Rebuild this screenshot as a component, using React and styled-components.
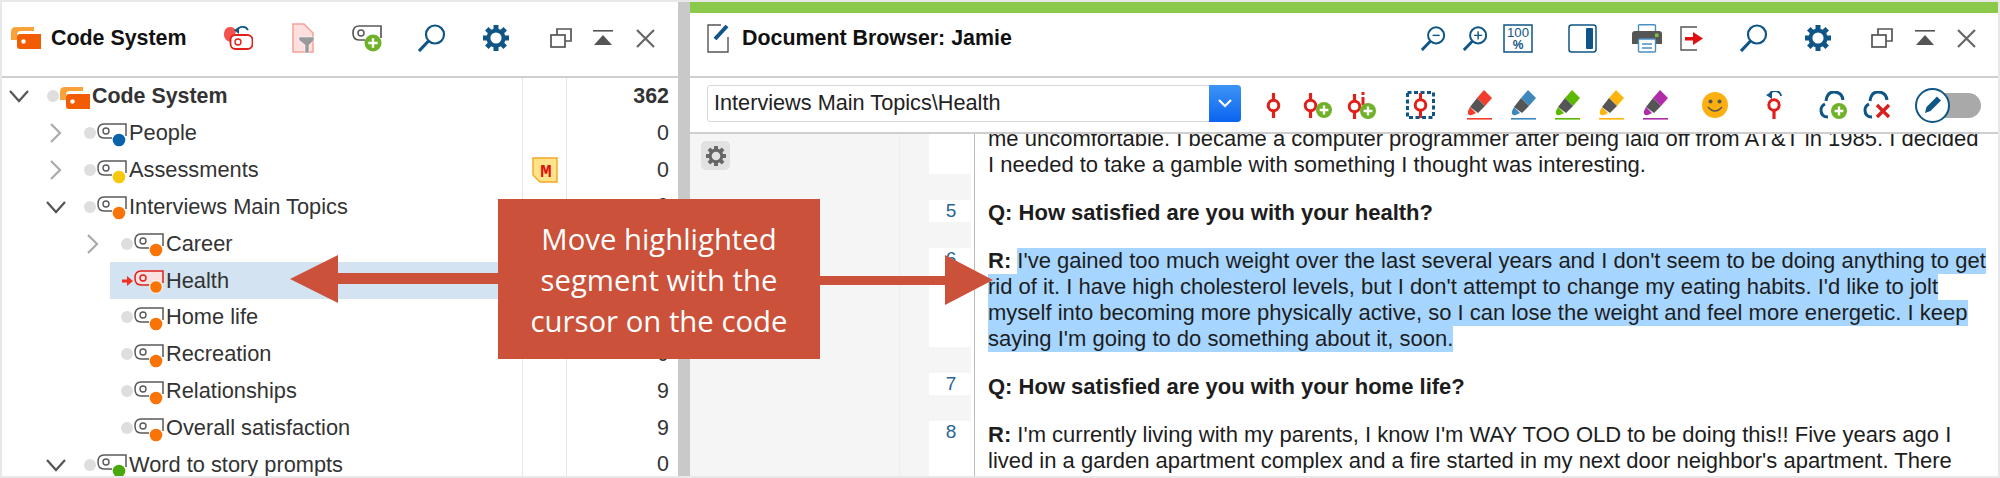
import React from 'react'
import styled, { createGlobalStyle } from 'styled-components'

const BLUE = '#0f5585'
const RED = '#e0201b'
const GREY = '#5a5a5a'

const Global = createGlobalStyle`
  html, body { margin: 0; padding: 0; background: #e8e8e8; }
  body { font-family: "Liberation Sans", Arial, sans-serif; color: #222; }
`

/* ---------- icons ---------- */

const RootCodeIcon = () => (
  <svg width="30" height="24" viewBox="0 0 30 24">
    <path d="M0 14 V6 Q0 1 5 1 H23 V5 H10 Q6 5 6 9 V14 Z" fill="#f9a13a" />
    <path d="M6 11 Q6 8 9 8 H30 V23 H9 Q6 23 6 20 Z" fill="#f25c05" />
    <circle cx="12.5" cy="15.5" r="2.2" fill="#fff" />
  </svg>
)

const CodeIcon = ({ color, active }) => (
  <svg width="30" height="24" viewBox="0 0 30 24">
    <path
      d="M29 13 V1 H7 Q1 1 1 8 Q1 15 7 15 H15"
      fill={active ? '#fbe0e0' : 'none'}
      stroke={active ? RED : GREY}
      strokeWidth="1.5"
    />
    <circle cx="9" cy="8" r="3" fill="none" stroke={active ? RED : GREY} strokeWidth="1.4" />
    <circle cx="22" cy="17" r="6.3" fill={color} stroke={active ? '#fff' : 'none'} strokeWidth="1" />
  </svg>
)

const Chevron = ({ open }) => (
  <svg width="20" height="20" viewBox="0 0 20 20" fill="none">
    {open ? (
      <path d="M1 5 L10 15 L19 5" stroke="#555" strokeWidth="2.2" />
    ) : (
      <path d="M5 1 L14 10 L5 19" stroke="#aaa" strokeWidth="2.2" />
    )}
  </svg>
)

const AddBadge = ({ cx, cy, r = 8 }) => (
  <g>
    <circle cx={cx} cy={cy} r={r} fill="#6fb22a" />
    <path d={`M${cx - r * 0.55} ${cy} H${cx + r * 0.55} M${cx} ${cy - r * 0.55} V${cy + r * 0.55}`} stroke="#fff" strokeWidth="2.4" />
  </g>
)

const Search = ({ minus, plus, size = 29 }) => (
  <svg width={size} height={size - 1} viewBox="0 0 29 28" fill="none">
    <circle cx="18" cy="10.5" r="9" stroke={BLUE} strokeWidth="2.2" />
    <path d="M11.5 17 L2 27" stroke={BLUE} strokeWidth="3.2" />
    {minus && <path d="M14 10.5 H22" stroke={BLUE} strokeWidth="1.6" />}
    {plus && <path d="M13.5 10.5 H22.5 M18 6 V15" stroke={BLUE} strokeWidth="1.6" />}
  </svg>
)

const Gear = ({ size = 26, color = BLUE }) => (
  <svg width={size} height={size} viewBox="0 0 26 26" fill="none">
    <circle cx="13" cy="13" r="7.6" stroke={color} strokeWidth="4" />
    {[0, 45, 90, 135, 180, 225, 270, 315].map(a => (
      <rect key={a} x="10.5" y="0" width="5" height="5" fill={color} transform={`rotate(${a} 13 13)`} />
    ))}
  </svg>
)

const WindowIcon = () => (
  <svg width="22" height="20" viewBox="0 0 22 20" fill="none" stroke="#555" strokeWidth="1.7">
    <path d="M7 7 V1 H21 V13 H15" />
    <rect x="1" y="7" width="14" height="12" />
  </svg>
)

const CollapseIcon = () => (
  <svg width="20" height="16" viewBox="0 0 20 16">
    <rect x="0" y="0" width="20" height="1.6" fill="#555" />
    <path d="M10 5 L19 15 H1 Z" fill="#555" />
  </svg>
)

const CloseIcon = () => (
  <svg width="19" height="19" viewBox="0 0 19 19" fill="none">
    <path d="M1 1 L18 18 M18 1 L1 18" stroke="#666" strokeWidth="2.2" />
  </svg>
)

const UndoCodeIcon = () => (
  <svg width="29" height="24" viewBox="0 0 29 24" fill="none">
    <path d="M0 9 Q0 1 6 1 Q11 1 12 6 L6 16 Q0 14 0 9 Z" fill="#f4524d" />
    <path d="M13 5 A6 6 0 0 1 24 4" stroke={BLUE} strokeWidth="1.8" />
    <path d="M10 4 L15 1 V8 Z" fill={BLUE} />
    <rect x="6.5" y="9" width="22" height="14" rx="5" fill="#fff" stroke={RED} strokeWidth="1.8" />
    <circle cx="14" cy="16" r="3" stroke={RED} strokeWidth="1.4" />
  </svg>
)

const FunnelDocIcon = () => (
  <svg width="22" height="30" viewBox="0 0 22 30">
    <path d="M1 1 H12 L21 10 V29 H1 Z" fill="#fde0de" stroke="#f6a09a" strokeWidth="1.5" />
    <path d="M7 14 H22 V17 L17 22 V30 H13 V22 L7 17 Z" fill="#9a9a9a" stroke="#fff" strokeWidth="0.5" />
  </svg>
)

const AddCodeIcon = () => (
  <svg width="30" height="27" viewBox="0 0 30 27" fill="none">
    <path d="M29 13 V1 H7 Q1 1 1 8 Q1 15 7 15 H13" stroke={GREY} strokeWidth="1.7" />
    <circle cx="9" cy="8" r="3" stroke={GREY} strokeWidth="1.5" />
    <AddBadge cx={21} cy={18} r={8.5} />
  </svg>
)

const DocEditIcon = () => (
  <svg width="22" height="29" viewBox="0 0 22 29" fill="none">
    <path d="M14 1 H1 V28 H21 V13" stroke="#555" strokeWidth="1.4" />
    <path d="M8 15 L20 2" stroke={BLUE} strokeWidth="4" />
  </svg>
)

const HundredIcon = () => (
  <svg width="30" height="29" viewBox="0 0 30 29">
    <rect x="1" y="1" width="28" height="27" fill="none" stroke={BLUE} strokeWidth="1.5" />
    <text x="15" y="13" textAnchor="middle" fontSize="13" fontFamily="Liberation Sans" fill={BLUE} textLength="22" lengthAdjust="spacingAndGlyphs">100</text>
    <text x="15" y="25" textAnchor="middle" fontSize="12" fontWeight="700" fontFamily="Liberation Sans" fill={BLUE}>%</text>
  </svg>
)

const PanelIcon = () => (
  <svg width="29" height="29" viewBox="0 0 29 29">
    <rect x="1" y="1" width="27" height="27" rx="2.5" fill="#fff" stroke={BLUE} strokeWidth="1.5" />
    <rect x="18" y="4" width="7" height="21" rx="1" fill={BLUE} />
  </svg>
)

const PrinterIcon = () => (
  <svg width="30" height="29" viewBox="0 0 30 29" fill="none">
    <rect x="6.5" y="0.8" width="17" height="10" rx="1" stroke="#4a8fc0" strokeWidth="1.4" />
    <path d="M0 10 Q0 7 3 7 H27 Q30 7 30 10 V20 H0 Z" fill="#555" />
    <rect x="23" y="9.5" width="3.5" height="3.5" fill="#7fc241" />
    <rect x="6.5" y="15" width="17" height="13" rx="1" fill="#fff" stroke="#4a8fc0" strokeWidth="1.4" />
    <path d="M10 20 H20 M10 24 H20" stroke="#4a8fc0" strokeWidth="1.4" />
  </svg>
)

const ExportIcon = () => (
  <svg width="23" height="25" viewBox="0 0 23 25" fill="none">
    <path d="M17 1 H1 V24 H17" stroke="#555" strokeWidth="1.4" />
    <path d="M5 11 H13 V6 L23 12.5 L13 19 V14.5 H5 Z" fill="#e01010" />
  </svg>
)

const PinIcon = () => (
  <svg width="15" height="25" viewBox="0 0 15 25" fill="none" stroke={RED}>
    <path d="M7.5 0 V7 M7.5 18 V25" strokeWidth="3.2" />
    <circle cx="7.5" cy="12.5" r="5.3" strokeWidth="3" />
  </svg>
)

const PinAddIcon = () => (
  <svg width="29" height="25" viewBox="0 0 29 25" fill="none" stroke={RED}>
    <path d="M7.5 0 V7 M7.5 18 V25" strokeWidth="3.2" />
    <circle cx="7.5" cy="12.5" r="5.3" strokeWidth="3" />
    <g stroke="none"><AddBadge cx={21} cy={17} /></g>
  </svg>
)

const PinInfoAddIcon = () => (
  <svg width="29" height="27" viewBox="0 0 29 27" fill="none" stroke={RED}>
    <path d="M7.5 2 V9 M7.5 20 V27" strokeWidth="3.2" />
    <circle cx="7.5" cy="14.5" r="5.3" strokeWidth="3" />
    <path d="M16 0 V3 M16 5 V13" strokeWidth="3" />
    <g stroke="none"><AddBadge cx={21} cy={19} /></g>
  </svg>
)

const PinBoxIcon = () => (
  <svg width="29" height="28" viewBox="0 0 29 28" fill="none">
    <rect x="1.5" y="1.5" width="26" height="25" stroke={BLUE} strokeWidth="3" strokeDasharray="4 2.5" />
    <path d="M14.5 2 V9 M14.5 20 V27" stroke={RED} strokeWidth="3" />
    <circle cx="14.5" cy="14" r="5.3" stroke={RED} strokeWidth="3" />
  </svg>
)

const Marker = ({ color }) => (
  <svg width="25" height="30" viewBox="0 0 25 30">
    <path d="M17 0 L25 8 L18 16 L10 8 Z" fill={color} />
    <path d="M10 8 L18 16 L11 23 L3 17 Z" fill="#555" />
    <path d="M3 17 L9 23 L5 25 Q0 26 1 21 Z" fill={color} />
    <rect x="0" y="28" width="25" height="1.6" fill={color} />
  </svg>
)

const Smiley = () => (
  <svg width="26" height="26" viewBox="0 0 26 26" fill="none">
    <circle cx="13" cy="13" r="13" fill="#fbb00f" />
    <circle cx="8.5" cy="9.5" r="2" fill="#555" />
    <circle cx="17.5" cy="9.5" r="2" fill="#555" />
    <path d="M6 15 Q13 23 20 15" stroke="#555" strokeWidth="1.6" />
  </svg>
)

const PinUndoIcon = () => (
  <svg width="16" height="28" viewBox="0 0 16 28" fill="none">
    <path d="M3 5 A6 5 0 0 1 15 5" stroke={BLUE} strokeWidth="1.8" />
    <path d="M0 4 L6 1 V8 Z" fill={BLUE} />
    <circle cx="8" cy="14" r="5.2" stroke={RED} strokeWidth="3" />
    <path d="M8 19 V28" stroke={RED} strokeWidth="3.2" />
  </svg>
)

const CloudAdd = () => (
  <svg width="28" height="28" viewBox="0 0 28 28" fill="none">
    <path d="M9 26 Q2 26 2 19 Q2 15 6 13" stroke={BLUE} strokeWidth="3" />
    <path d="M7 10 Q8 1 15 1 Q23 1 24 9" stroke={BLUE} strokeWidth="3" />
    <AddBadge cx={20} cy={20} />
  </svg>
)

const CloudRemove = () => (
  <svg width="28" height="28" viewBox="0 0 28 28" fill="none">
    <path d="M9 26 Q2 26 2 19 Q2 15 6 13" stroke={BLUE} strokeWidth="3" />
    <path d="M7 10 Q8 1 15 1 Q23 1 24 9" stroke={BLUE} strokeWidth="3" />
    <path d="M14 14 L26 26 M26 14 L14 26" stroke="#d8201c" strokeWidth="3.4" />
  </svg>
)

const EditToggle = () => (
  <svg width="66" height="35" viewBox="0 0 66 35">
    <rect x="12" y="5" width="54" height="25" rx="12.5" fill="#a9a9a9" />
    <circle cx="17.5" cy="17.5" r="16.5" fill="#fff" stroke={BLUE} strokeWidth="2" />
    <path d="M10 25 L11.5 19 L22 8.5 L26 12.5 L15.5 23 Z" fill={BLUE} />
  </svg>
)

const MemoIcon = () => (
  <svg width="26" height="26" viewBox="0 0 26 26">
    <path d="M1 1 H25 V25 H8 L1 18 Z" fill="#fde48a" stroke="#f5a623" strokeWidth="1.4" />
    <text x="14" y="20" textAnchor="middle" fontSize="19" fontWeight="700" fontFamily="Liberation Mono" fill="#e01010">M</text>
  </svg>
)

const RedArrow = () => (
  <svg width="11" height="10" viewBox="0 0 11 10">
    <path d="M0 3.5 H5 V0 L11 5 L5 10 V6.5 H0 Z" fill="#f03020" />
  </svg>
)

/* ---------- data ---------- */

const ORANGE = '#f97306'

const codes = [
  { label: 'Code System', level: 0, root: true, open: true, count: '362' },
  { label: 'People', level: 1, color: '#0a62ab', closed: true, count: '0' },
  { label: 'Assessments', level: 1, color: '#f8c80a', closed: true, memo: true, count: '0' },
  { label: 'Interviews Main Topics', level: 1, color: ORANGE, open: true, count: '0' },
  { label: 'Career', level: 2, color: ORANGE, closed: true, count: '0' },
  { label: 'Health', level: 2, color: ORANGE, active: true, count: '0' },
  { label: 'Home life', level: 2, color: ORANGE, count: '0' },
  { label: 'Recreation', level: 2, color: ORANGE, count: '0' },
  { label: 'Relationships', level: 2, color: ORANGE, count: '9' },
  { label: 'Overall satisfaction', level: 2, color: ORANGE, count: '9' },
  { label: 'Word to story prompts', level: 1, color: '#4aa80c', open: true, count: '0' },
]

/* stripes of the paragraph-number column */
const stripes = [
  { height: 40 },
  { height: 26, empty: true },
  { height: 22, num: 5 },
  { height: 26, empty: true },
  { height: 99, num: 6 },
  { height: 26, empty: true },
  { height: 22, num: 7 },
  { height: 26, empty: true },
  { height: 55, num: 8 },
]

/* ---------- components ---------- */

const App = () => {
  return (
    <Page>
      <Global />
      <LeftPanel>
        <LeftTitleBar>
          <RootCodeIcon />
          <PanelTitle $width={173} $gap={10}>Code System</PanelTitle>
          <Slot><UndoCodeIcon /></Slot>
          <Slot $gap={39}><FunnelDocIcon /></Slot>
          <Slot $gap={38}><AddCodeIcon /></Slot>
          <Slot $gap={35}><Search /></Slot>
          <Slot $gap={37}><Gear /></Slot>
          <Slot $gap={41}><WindowIcon /></Slot>
          <Slot $gap={21}><CollapseIcon /></Slot>
          <Slot $gap={23}><CloseIcon /></Slot>
        </LeftTitleBar>

        <Tree>
          {codes.map(code => (
            <Row key={code.label}>
              <Indent $level={code.level}>
                {code.open && <Chevron open />}
                {code.closed && <Chevron />}
              </Indent>
              <RowBody $active={code.active}>
                <DotSlot>{code.active ? <RedArrow /> : <Dot />}</DotSlot>
                <CodeSlot>
                  {code.root ? <RootCodeIcon /> : <CodeIcon color={code.color} active={code.active} />}
                </CodeSlot>
                <RowLabel $bold={code.root}>{code.label}</RowLabel>
              </RowBody>
              <MemoCell>{code.memo && <MemoIcon />}</MemoCell>
              <CountCell $bold={code.root}>{code.count}</CountCell>
            </Row>
          ))}
        </Tree>
      </LeftPanel>

      <Divider />

      <RightPanel>
        <GreenBar />
        <RightTitleBar>
          <DocEditIcon />
          <PanelTitle $width={678} $gap={13}>Document Browser: Jamie</PanelTitle>
          <Slot><Search minus size={26} /></Slot>
          <Slot $gap={16}><Search plus size={26} /></Slot>
          <Slot $gap={15}><HundredIcon /></Slot>
          <Slot $gap={35}><PanelIcon /></Slot>
          <Slot $gap={35}><PrinterIcon /></Slot>
          <Slot $gap={18}><ExportIcon /></Slot>
          <Slot $gap={36}><Search /></Slot>
          <Slot $gap={37}><Gear /></Slot>
          <Slot $gap={40}><WindowIcon /></Slot>
          <Slot $gap={22}><CollapseIcon /></Slot>
          <Slot $gap={22}><CloseIcon /></Slot>
        </RightTitleBar>

        <Toolbar>
          <Combo>
            <ComboText>Interviews Main Topics\Health</ComboText>
            <ComboButton>
              <svg width="14" height="9" viewBox="0 0 14 9" fill="none">
                <path d="M1 1 L7 7 L13 1" stroke="#fff" strokeWidth="2.2" />
              </svg>
            </ComboButton>
          </Combo>
          <Slot $gap={25}><PinIcon /></Slot>
          <Slot $gap={22}><PinAddIcon /></Slot>
          <Slot $gap={15}><PinInfoAddIcon /></Slot>
          <Slot $gap={30}><PinBoxIcon /></Slot>
          <Slot $gap={32}><Marker color="#f23c2c" /></Slot>
          <Slot $gap={19}><Marker color="#3f88bb" /></Slot>
          <Slot $gap={19}><Marker color="#5cb800" /></Slot>
          <Slot $gap={19}><Marker color="#fdb40f" /></Slot>
          <Slot $gap={19}><Marker color="#ad2ea8" /></Slot>
          <Slot $gap={34}><Smiley /></Slot>
          <Slot $gap={38}><PinUndoIcon /></Slot>
          <Slot $gap={37}><CloudAdd /></Slot>
          <Slot $gap={16}><CloudRemove /></Slot>
          <Slot $gap={24}><EditToggle /></Slot>
        </Toolbar>

        <Browser>
          <Gutter>
            <GearButton><Gear size={20} color="#666" /></GearButton>
          </Gutter>
          <GutterThin />
          <Numbers>
            {stripes.map((s, i) => (
              <Stripe key={i} $height={s.height} $empty={s.empty}>{s.num}</Stripe>
            ))}
          </Numbers>
          <TextArea>
            <Para>
              me uncomfortable. I became a computer programmer after being laid off from AT&amp;T in 1985. I decided<br />
              I needed to take a gamble with something I thought was interesting.
            </Para>
            <Para><b>Q: How satisfied are you with your health?</b></Para>
            <Para>
              <Mark $plain><b>R:</b> </Mark><Mark>I've gained too much weight over the last several years and I don't seem to be doing anything to get</Mark><br />
              <Mark>rid of it. I have high cholesterol levels, but I don't attempt to change my eating habits. I'd like to jolt</Mark><br />
              <Mark>myself into becoming more physically active, so I can lose the weight and feel more energetic. I keep</Mark><br />
              <Mark>saying I'm going to do something about it, soon.</Mark>
            </Para>
            <Para><b>Q: How satisfied are you with your home life?</b></Para>
            <Para>
              <b>R:</b> I'm currently living with my parents, I know I'm WAY TOO OLD to be doing this!! Five years ago I<br />
              lived in a garden apartment complex and a fire started in my next door neighbor's apartment. There
            </Para>
          </TextArea>
        </Browser>
      </RightPanel>

      <Callout>Move highlighted<br />segment with the<br />cursor on the code</Callout>
      <LeftArrow viewBox="0 0 208 48" width="208" height="48">
        <path d="M0 24 L48 0 V18 H208 V29 H48 V48 Z" fill="#cb513a" />
      </LeftArrow>
      <RightArrow viewBox="0 0 173 50" width="173" height="50">
        <path d="M173 25 L125 0 V21 H0 V30 H125 V50 Z" fill="#cb513a" />
      </RightArrow>
    </Page>
  )
}

const Page = styled.div`
  position: relative;
  width: 2000px;
  height: 478px;
  box-sizing: border-box;
  padding: 2px;
  display: flex;
  background: #e8e8e8;
  overflow: hidden;
`

const LeftPanel = styled.div`
  width: 676px;
  background: #fff;
  display: flex;
  flex-direction: column;
`

const Divider = styled.div`
  width: 12px;
  background: #c9c9c9;
`

const RightPanel = styled.div`
  flex: 1;
  min-width: 0;
  background: #fff;
  display: flex;
  flex-direction: column;
`

const LeftTitleBar = styled.div`
  height: 76px;
  box-sizing: border-box;
  padding: 0 0 2px 9px;
  display: flex;
  align-items: center;
  border-bottom: 2px solid #cfcfcf;
  flex-shrink: 0;
`

const PanelTitle = styled.div`
  width: ${p => p.$width}px;
  margin-left: ${p => p.$gap}px;
  font-size: 21.4px;
  font-weight: 700;
  color: #111;
  white-space: nowrap;
`

const Slot = styled.span`
  display: flex;
  flex-shrink: 0;
  margin-left: ${p => p.$gap || 0}px;
`

const Tree = styled.div`
  flex: 1;
  overflow: hidden;
`

const Row = styled.div`
  height: 36.85px;
  display: flex;
  align-items: stretch;
`

const Indent = styled.div`
  width: ${p => 34 + p.$level * 37}px;
  flex-shrink: 0;
  box-sizing: border-box;
  padding-left: ${p => p.$level * 37}px;
  display: flex;
  align-items: center;
  justify-content: center;
`

const RowBody = styled.div`
  flex: 1;
  min-width: 0;
  padding-left: 11px;
  display: flex;
  align-items: center;
  background: ${p => (p.$active ? '#d3e3f1' : 'transparent')};
`

const DotSlot = styled.span`
  width: 12px;
  margin-right: 1px;
  display: flex;
  align-items: center;
  justify-content: center;
`

const Dot = styled.span`
  width: 12px;
  height: 12px;
  flex-shrink: 0;
  border-radius: 50%;
  background: #dedede;
`

const CodeSlot = styled.span`
  display: flex;
  margin-top: 3px;
`

const RowLabel = styled.span`
  margin-left: 2px;
  font-size: ${p => (p.$bold ? '21.4px' : '21.8px')};
  font-weight: ${p => (p.$bold ? 700 : 400)};
  color: #333;
  white-space: nowrap;
`

const MemoCell = styled.div`
  width: 44px;
  flex-shrink: 0;
  box-sizing: border-box;
  border-left: 1px solid #e6e6e6;
  display: flex;
  align-items: center;
  justify-content: center;
`

const CountCell = styled.div`
  width: 112px;
  flex-shrink: 0;
  box-sizing: border-box;
  border-left: 1px solid #e6e6e6;
  padding-right: 9px;
  display: flex;
  align-items: center;
  justify-content: flex-end;
  font-size: 21.4px;
  font-weight: ${p => (p.$bold ? 700 : 400)};
  color: #333;
`

const GreenBar = styled.div`
  height: 11px;
  background: #8bc94a;
  flex-shrink: 0;
`

const RightTitleBar = styled.div`
  height: 65px;
  padding: 0 0 13px 17px;
  box-sizing: border-box;
  display: flex;
  align-items: center;
  border-bottom: 2px solid #cfcfcf;
  flex-shrink: 0;
`

const Toolbar = styled.div`
  height: 56px;
  box-sizing: border-box;
  padding-left: 17px;
  display: flex;
  align-items: center;
  border-bottom: 2px solid #cfcfcf;
  flex-shrink: 0;
`

const Combo = styled.div`
  width: 534px;
  height: 37px;
  margin-top: -4px;
  box-sizing: border-box;
  border: 1px solid #d8d8d8;
  border-radius: 3px;
  display: flex;
  align-items: stretch;
  flex-shrink: 0;
`

const ComboText = styled.div`
  flex: 1;
  padding-left: 6px;
  display: flex;
  align-items: center;
  font-size: 21.7px;
  color: #222;
`

const ComboButton = styled.div`
  width: 32px;
  margin: -1px;
  border-radius: 0 4px 4px 0;
  background: linear-gradient(#3d94f6, #0b64f0);
  display: flex;
  align-items: center;
  justify-content: center;
`

const Browser = styled.div`
  flex: 1;
  min-height: 0;
  display: flex;
  overflow: hidden;
`

const Gutter = styled.div`
  width: 209px;
  flex-shrink: 0;
  padding: 7px 0 0 11px;
  box-sizing: border-box;
  background: #f5f5f5;
`

const GearButton = styled.div`
  width: 29px;
  height: 29px;
  border-radius: 5px;
  background: #e2e2e2;
  display: flex;
  align-items: center;
  justify-content: center;
`

const GutterThin = styled.div`
  width: 30px;
  flex-shrink: 0;
  background: #f5f5f5;
  border-left: 1px solid #eee;
  box-sizing: border-box;
`

const Numbers = styled.div`
  width: 42px;
  flex-shrink: 0;
  display: flex;
  flex-direction: column;
`

const Stripe = styled.div`
  height: ${p => p.$height}px;
  flex-shrink: 0;
  background: ${p => (p.$empty ? '#f5f5f5' : '#fff')};
  color: #2a6496;
  font-size: 19px;
  line-height: 22px;
  text-align: center;
  padding-left: 2px;
  box-sizing: border-box;
`

const TextArea = styled.div`
  flex: 1;
  min-width: 0;
  margin-top: -8px;
  padding-left: 13px;
  margin-left: 3px;
  border-left: 1px solid #bbb;
  font-size: 22px;
  line-height: 26px;
  color: #1d1d1d;
  white-space: nowrap;
  overflow: hidden;
`

const Para = styled.p`
  margin: 0 0 22px;
`

const Mark = styled.span`
  display: inline-block;
  background: ${p => (p.$plain ? 'transparent' : '#a6d5ff')};
  white-space: pre;
`

const Callout = styled.div`
  position: absolute;
  left: 498px;
  top: 199px;
  width: 322px;
  height: 160px;
  box-sizing: border-box;
  padding-top: 3px;
  display: flex;
  align-items: center;
  justify-content: center;
  text-align: center;
  background: #cb513a;
  color: #fff;
  font-family: "Open Sans", sans-serif;
  font-size: 29.3px;
  line-height: 41px;
`

const LeftArrow = styled.svg`
  position: absolute;
  left: 290px;
  top: 255px;
`

const RightArrow = styled.svg`
  position: absolute;
  left: 820px;
  top: 255px;
`

export default App
